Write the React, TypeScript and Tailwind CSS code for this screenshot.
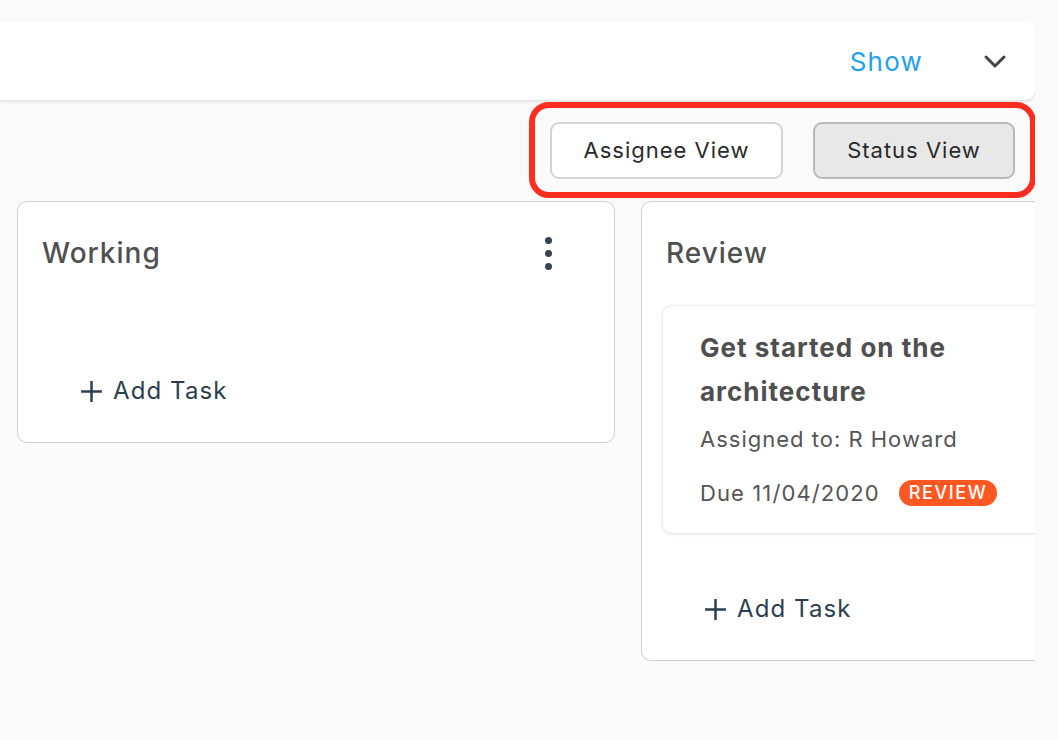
import React from 'react';

const font = { fontFamily: 'Inter, "Noto Sans", sans-serif' };

const PlusIcon = () => (
  <svg width="25" height="25" viewBox="0 0 24 24" fill="none" stroke="currentColor" strokeWidth="2.4" strokeLinecap="butt">
    <path d="M12 2v20M2 12h20" />
  </svg>
);

const AddTask = () => (
  <button className="flex items-center gap-[9px] text-[24px] leading-[32px] tracking-[1.1px] text-[#2c3e50] ml-[41px]">
    <PlusIcon />
    <span>Add Task</span>
  </button>
);

const Kebab = () => (
  <div className="flex flex-col gap-[6px] items-center mr-[42px]">
    <span className="w-[7px] h-[7px] rounded-full bg-[#344456]" />
    <span className="w-[7px] h-[7px] rounded-full bg-[#344456]" />
    <span className="w-[7px] h-[7px] rounded-full bg-[#344456]" />
  </div>
);

type Task = { title: string; assignee: string; due: string; status: string };

const TaskCard = ({ task }: { task: Task }) => (
  <div className="bg-white border border-[#ececec] rounded-[10px] shadow-[0_1px_3px_rgba(0,0,0,0.08)] pt-[20px] pb-[26px] pl-[37px] pr-[20px]">
    <h3 className="text-[26px] leading-[44px] font-bold tracking-[1px] text-[#4f4f4f] w-[300px]">{task.title}</h3>
    <p className="mt-[11px] text-[22px] leading-[28px] tracking-[1px] text-[#555]">Assigned to: {task.assignee}</p>
    <div className="mt-[26px] flex items-center gap-[19px]">
      <span className="text-[22px] leading-[28px] tracking-[1.1px] text-[#555]">Due {task.due}</span>
      <span className="h-[26px] px-[10px] rounded-full bg-[#ff5722] text-white text-[18px] font-medium tracking-[1.6px] leading-[26px]">
        {task.status}
      </span>
    </div>
  </div>
);

const Column = ({ title, tasks, menu }: { title: string; tasks: Task[]; menu?: boolean }) => (
  <div className="shrink-0 w-[598px] bg-white border border-[#cfcfcf] rounded-[10px] px-[20px] pt-[29px] pb-[35px] self-start">
    <div className="flex items-center justify-between h-[44px] pl-[4px]">
      <h2 className="text-[28px] font-medium tracking-[1px] text-[#505050]">{title}</h2>
      {menu && <Kebab />}
    </div>
    <div className="pt-[30px] pb-[59px] min-h-[100px] flex flex-col gap-3">
      {tasks.map((t) => (
        <TaskCard key={t.title} task={t} />
      ))}
    </div>
    <AddTask />
  </div>
);

const App: React.FC = () => {
  const review: Task[] = [
    { title: 'Get started on the architecture', assignee: 'R Howard', due: '11/04/2020', status: 'REVIEW' },
  ];

  return (
    <div className="w-[1058px] h-[740px] bg-[#fafafa] overflow-hidden" style={font}>
      <div className="w-[1035px] overflow-hidden pt-[22px]">
        {/* Filter bar */}
        <div className="h-[78px] bg-white rounded-r-[10px] shadow-[0_2px_3px_rgba(0,0,0,0.1)] flex items-center justify-end pr-[28px]">
          <button className="text-[26px] tracking-[1.2px] text-[#1da1f2] mr-[60px]">Show</button>
          <svg width="24" height="16" viewBox="0 0 24 16" fill="none" stroke="#444" strokeWidth="3" strokeLinecap="round" strokeLinejoin="round">
            <path d="M3 4l9 9 9-9" />
          </svg>
        </div>

        {/* View toggle */}
        <div className="flex justify-end mt-[2px]">
          <div className="flex gap-[30px] border-[6px] border-[#ff2d20] rounded-[20px] px-[15px] pt-[14px] pb-[13px] -mr-[1px]">
            <button className="w-[233px] h-[57px] bg-white border-2 border-[#d4d4d4] rounded-[9px] text-[22px] tracking-[1px] text-[#2a2a2a]">
              Assignee View
            </button>
            <button className="w-[202px] h-[57px] bg-[#e8e8e8] border-2 border-[#b9b9b9] rounded-[9px] text-[22px] tracking-[1px] text-[#2a2a2a]">
              Status View
            </button>
          </div>
        </div>

        {/* Columns */}
        <div className="flex gap-[26px] pl-[17px] mt-[3px]">
          <Column title="Working" tasks={[]} menu />
          <Column title="Review" tasks={review} />
        </div>
      </div>
    </div>
  );
};

export default App;
